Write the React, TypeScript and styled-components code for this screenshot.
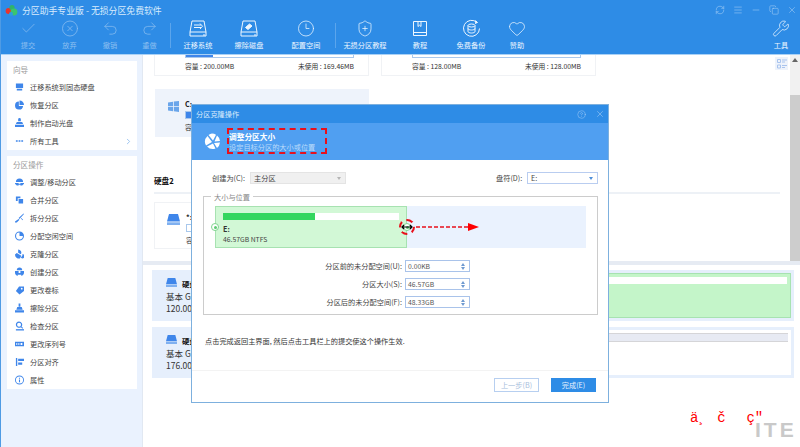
import * as React from 'react';
import styled, { createGlobalStyle } from 'styled-components';
import {
  Check,
  ChevronRight,
  CircleHelp,
  CircleX,
  Clock3,
  Copy,
  Heart,
  Menu,
  Minus,
  Redo2,
  RefreshCw,
  ShieldPlus,
  Undo2,
  Wrench,
  X,
} from 'lucide-react';

const GlobalStyle = createGlobalStyle`
  html, body {
    margin: 0;
    padding: 0;
    background: #fff;
    overflow: hidden;
  }
  * { box-sizing: border-box; }
`;

const cjk = `"Noto Sans CJK SC", "Liberation Sans", sans-serif`;
const BLUE = '#2e8ce6';
const ICON = '#3f86ea';

const Window = styled.div`
  position: relative;
  width: 800px;
  height: 447px;
  display: flex;
  flex-direction: column;
  overflow: hidden;
  background: #fff;
  border-left: 1px solid #4f9be4;
  font-family: ${cjk};
  font-size: 7.2px;
  color: #333;
`;

const Header = styled.div`
  height: 55px;
  flex: none;
  background: ${BLUE};
  border-bottom: 1px solid #a9d1f6;
`;

const TitleBar = styled.div`
  height: 19px;
  display: flex;
  align-items: center;
  padding: 1px 3px 0 4px;
  color: #d8ebfd;
  font-size: 8.85px;
`;

const TitleText = styled.span`
  margin-left: 4px;
`;

const WindowButtons = styled.div`
  margin-left: auto;
  display: flex;
  align-items: center;
  gap: 8px;
  color: #cfe5fb;
`;

const Toolbar = styled.div`
  height: 35px;
  display: flex;
  padding-left: 6px;
`;

const Tool = styled.div<{ $w: number; $ml?: number; $off?: boolean }>`
  width: ${(p) => p.$w}px;
  margin-left: ${(p) => p.$ml ?? 0}px;
  display: flex;
  flex-direction: column;
  align-items: center;
  justify-content: flex-start;
  color: ${(p) => (p.$off ? '#8dbff0' : '#eef7ff')};
  svg { height: 19px; margin-bottom: 2px; display: block; }
  span { line-height: 10px; white-space: nowrap; }
`;

const ToolSep = styled.div`
  width: 1px;
  margin: 4px 0 6px 1px;
  background: #5ba5ec;
`;

const Body = styled.div`
  flex: 1;
  display: flex;
  min-height: 0;
`;

const Sidebar = styled.div`
  width: 142px;
  flex: none;
  background: #eaf2fe;
  border-right: 1px solid #e1e8f2;
  padding: 6px 5px 0 6px;
  display: flex;
  flex-direction: column;
  gap: 6px;
`;

const SideCard = styled.div`
  background: #fff;
`;

const SideTitle = styled.div`
  height: 17px;
  line-height: 18px;
  padding-left: 6px;
  color: #9a9a9a;
  font-size: 7.6px;
`;

const SideRow = styled.div`
  height: 18px;
  display: flex;
  align-items: center;
  padding: 0 4px 0 8px;
  color: #444;
  svg { flex: none; }
  span { margin-left: 6px; white-space: nowrap; }
  svg + span + svg { margin-left: auto; }
`;

const Main = styled.div`
  flex: 1;
  display: flex;
  flex-direction: column;
  min-width: 0;
`;

const TopArea = styled.div`
  position: relative;
  height: 206px;
  flex: none;
  display: flex;
`;

const ScrollContent = styled.div`
  flex: 1;
  padding-left: 11px;
  overflow: hidden;
`;

const PartialRow = styled.div`
  height: 21px;
  display: flex;
  gap: 12px;
`;

const PartialCard = styled.div`
  width: 215px;
  height: 21px;
  padding: 0 14px 0 30px;
  background: #fff;
  border: 1px solid #f0f2f5;
  border-top: 0;
`;

const BarEnd = styled.div`
  height: 3px;
  border: 1px solid #a9c8ec;
  border-top: 0;
  position: relative;
  background: #fff;
`;

const BarFill = styled.div<{ $pct: number }>`
  height: 100%;
  width: ${(p) => p.$pct}%;
  background: ${ICON};
`;

const Metrics = styled.div`
  display: flex;
  justify-content: space-between;
  height: 12px;
  line-height: 12px;
  margin-top: 2px;
  white-space: nowrap;
  color: #333;
  font-size: 6.8px;
`;

const DiskCard = styled.div<{ $selected?: boolean; $mt: number }>`
  width: ${(p) => (p.$selected ? 214 : 215)}px;
  height: ${(p) => (p.$selected ? 48 : 47)}px;
  margin-top: ${(p) => p.$mt}px;
  margin-left: ${(p) => (p.$selected ? 1 : 0)}px;
  display: flex;
  padding: 9px 14px 0 12px;
  background: ${(p) => (p.$selected ? '#eef3fb' : '#fff')};
  border: 1px solid ${(p) => (p.$selected ? '#eef3fb' : '#f0f2f5')};
  > svg { margin: 2px 6px 0 0; flex: none; }
`;

const CardBody = styled.div`
  flex: 1;
`;

const CardName = styled.div`
  height: 12px;
  line-height: 10px;
  font-weight: 700;
  color: #222;
`;

const CardBar = styled.div`
  height: 8px;
  border: 1px solid #a9c8ec;
  background: #fff;
`;

const SectionTitle = styled.div`
  margin-top: 38px;
  height: 12px;
  line-height: 12px;
  font-size: 7.6px;
  font-weight: 700;
  color: #111;
`;

const SectionLine = styled.div`
  width: 626px;
  height: 2px;
  margin-top: 5px;
  background: #edf1f6;
`;

const ViewToggle = styled.div`
  position: absolute;
  top: 2px;
  right: 12px;
  width: 13px;
  height: 13px;
  display: flex;
  align-items: center;
  justify-content: center;
  background: #eef3fb;
`;

const Scrollbar = styled.div`
  width: 10px;
  flex: none;
  background: #f1f1f1;
  display: flex;
  flex-direction: column;
`;

const ScrollUp = styled.div`
  height: 40px;
  display: flex;
  justify-content: center;
  padding-top: 3px;
`;

const ScrollThumb = styled.div`
  flex: 1;
  background: #cdcdcd;
`;

const Divider = styled.div`
  height: 4px;
  flex: none;
  background: #e6ebf3;
`;

const DiskList = styled.div`
  flex: 1;
  padding: 5px 6px 0 9px;
  display: flex;
  flex-direction: column;
  gap: 6px;
`;

const DiskItem = styled.div`
  height: 51px;
  display: flex;
  padding: 3px;
  background: #e6effc;
`;

const DiskInfo = styled.div`
  width: 130px;
  flex: none;
  padding: 5px 0 0 11px;
  color: #333;
  font-size: 8.5px;
`;

const DiskHead = styled.div`
  height: 12px;
  display: flex;
  align-items: flex-start;
  gap: 5px;
  font-size: 7.4px;
  font-weight: 700;
  color: #111;
  span { line-height: 12px; }
`;

const DiskLine = styled.div`
  height: 12px;
  line-height: 12px;
  white-space: nowrap;
`;

const PartBlock = styled.div<{ $used?: boolean }>`
  flex: 1;
  padding: 3px 3px 0;
  background: ${(p) => (p.$used ? '#c4f5c9' : '#fff')};
  border: ${(p) => (p.$used ? '1px solid #a7e2b1' : '0')};
`;

const PartBar = styled.div<{ $used?: boolean }>`
  height: ${(p) => (p.$used ? 7 : 9)}px;
  background: ${(p) => (p.$used ? '#fff' : '#e7eaf3')};
  border-top: ${(p) => (p.$used ? '0' : '1px solid #d5d5d8')};
  border-bottom: ${(p) => (p.$used ? '0' : '1px solid #d5d5d8')};
`;

/* dialog sits over the disk view */
const Dialog = styled.div`
  position: absolute;
  left: 190px;
  top: 104px;
  width: 418px;
  height: 299px;
  display: flex;
  flex-direction: column;
  background: #fff;
  border: 1px solid #7db0de;
`;

const DialogTitle = styled.div`
  height: 18px;
  flex: none;
  display: flex;
  align-items: center;
  padding: 0 3px 0 4px;
  background: ${BLUE};
  color: #d9ebfc;
`;

const DialogButtons = styled.div`
  margin-left: auto;
  display: flex;
  align-items: center;
  gap: 9px;
  color: #cfe5fb;
`;

const Banner = styled.div`
  height: 37px;
  flex: none;
  display: flex;
  align-items: center;
  padding-left: 12px;
  background: #509ff1;
`;

const BannerText = styled.div`
  margin-left: 8px;
  padding-top: 1px;
`;

const BannerTitle = styled.div`
  line-height: 10px;
  font-size: 7.7px;
  font-weight: 700;
  color: #fff;
`;

const BannerSub = styled.div`
  line-height: 10px;
  color: #bcdcfb;
`;

const SelectRow = styled.div`
  height: 12px;
  margin-top: 12px;
  flex: none;
  display: flex;
  align-items: center;
  padding: 0 10px 0 20px;
`;

const SelectLabel = styled.span<{ $w: number; $ml?: string }>`
  width: ${(p) => p.$w}px;
  margin-left: ${(p) => p.$ml ?? 0};
  color: #444;
  white-space: nowrap;
`;

const Select = styled.div<{ $w: number; $off?: boolean }>`
  width: ${(p) => p.$w}px;
  height: 12px;
  display: flex;
  align-items: center;
  justify-content: space-between;
  padding: 0 4px 0 3px;
  background: ${(p) => (p.$off ? '#f0f0f0' : '#fff')};
  border: 1px solid ${(p) => (p.$off ? '#e4e4e4' : '#b9cdf0')};
  color: #444;
`;

const Caret = styled.i<{ $off?: boolean }>`
  width: 0;
  height: 0;
  border-left: 2.5px solid transparent;
  border-right: 2.5px solid transparent;
  border-top: 3px solid ${(p) => (p.$off ? '#b5b5b5' : '#4f8fd8')};
`;

const SizeBox = styled.div`
  position: relative;
  height: 119px;
  margin: 12px 10px 0 11px;
  flex: none;
  padding: 9px 11px 0;
  border: 1px solid #ccc;
`;

const Legend = styled.span`
  position: absolute;
  left: 7px;
  top: -5px;
  padding: 0 3px;
  line-height: 10px;
  background: #fff;
  color: #888;
`;

const Strip = styled.div`
  height: 42px;
  background: #eaf2fe;
`;

const PartPanel = styled.div`
  position: relative;
  width: 192px;
  height: 42px;
  padding: 6px 7px 0;
  background: #d2f8d6;
  border: 1px solid #a7e2b1;
`;

const UsageTrack = styled.div`
  height: 7px;
  background: #fff;
`;

const UsageFill = styled.div<{ $pct: number }>`
  height: 100%;
  width: ${(p) => p.$pct}%;
  background: #33d65f;
`;

const PartName = styled.div`
  margin-top: 4px;
  line-height: 10px;
  font-weight: 700;
  color: #333;
`;

const PartSize = styled.div`
  line-height: 10px;
  color: #444;
  font-size: 6.8px;
`;

const Handle = styled.div<{ $side: 'left' | 'right' }>`
  position: absolute;
  top: 16px;
  ${(p) => p.$side}: -5px;
  width: 8px;
  height: 8px;
  border-radius: 50%;
  background: #fff;
  border: 1px solid #7fd48e;
  display: flex;
  align-items: center;
  justify-content: center;
  &::after {
    content: '';
    width: 3px;
    height: 3px;
    border-radius: 50%;
    background: #5ccb72;
  }
`;

const Fields = styled.div`
  width: 255px;
  margin-top: 12px;
  display: flex;
  flex-direction: column;
  gap: 6px;
`;

const FieldRow = styled.div`
  display: flex;
  justify-content: flex-end;
  align-items: center;
  height: 12px;
  gap: 3px;
  color: #444;
`;

const Spin = styled.div`
  width: 65px;
  height: 12px;
  display: flex;
  align-items: center;
  justify-content: space-between;
  padding: 0 4px 0 2px;
  border: 1px solid #a9c3ea;
  font-size: 6.8px;
  color: #555;
`;

const SpinArrows = styled.div`
  display: flex;
  flex-direction: column;
  gap: 1px;
`;

const SpinUp = styled.i`
  width: 0;
  height: 0;
  border-left: 2px solid transparent;
  border-right: 2px solid transparent;
  border-bottom: 3px solid #6f9ad0;
`;

const SpinDown = styled(SpinUp)`
  border-bottom: 0;
  border-top: 3px solid #6f9ad0;
`;

const Note = styled.div`
  margin: 20px 0 0 13px;
  line-height: 12px;
  color: #333;
`;

const DialogFooter = styled.div`
  margin-top: auto;
  height: 32px;
  flex: none;
  display: flex;
  justify-content: flex-end;
  gap: 12px;
  padding: 7px 12px 0 0;
  border-top: 1px solid #f3f3f3;
`;

const FooterButton = styled.div<{ $primary?: boolean }>`
  width: 45px;
  height: 14px;
  display: flex;
  align-items: center;
  justify-content: center;
  background: ${(p) => (p.$primary ? BLUE : '#fff')};
  border: 1px solid ${(p) => (p.$primary ? BLUE : '#b7cff0')};
  color: ${(p) => (p.$primary ? '#e8f3ff' : '#a7bedc')};
`;

/* red marks drawn on top of the screenshot */
const DashedBox = styled.div`
  position: absolute;
  left: 226px;
  top: 128px;
  width: 100px;
  height: 26px;
  border: 2px dashed #e8101c;
`;

const DashedCircle = styled.div`
  position: absolute;
  left: 398px;
  top: 219px;
  width: 16px;
  height: 16px;
  border-radius: 50%;
  border: 2px dashed #e8101c;
`;

const ArrowMark = styled.svg`
  position: absolute;
  left: 400px;
  top: 220px;
`;

const Garbled = styled.div`
  position: absolute;
  left: 689px;
  top: 413px;
  white-space: pre;
  font-family: "Liberation Mono", monospace;
  font-size: 14px;
  line-height: 10px;
  word-spacing: 2px;
  color: #f00;
`;

const Watermark = styled.div`
  position: absolute;
  left: 754px;
  top: 423px;
  font-family: "Liberation Sans", sans-serif;
  font-size: 21px;
  line-height: 14px;
  font-weight: 700;
  letter-spacing: 3px;
  color: #c9c9c9;
`;

const Logo = () => (
  <svg width="13" height="13" viewBox="0 0 13 13">
    <circle cx="3.6" cy="7" r="3" fill="#e8352d" />
    <circle cx="7" cy="3.6" r="2.6" fill="#2fb36a" />
    <circle cx="9" cy="8" r="3.4" fill="#3cc46d" />
    <circle cx="6" cy="10" r="2" fill="#2e9be0" />
  </svg>
);

const DriveArrow = () => (
  <svg width="20" height="19" viewBox="0 0 20 19" fill="none" stroke="currentColor" strokeWidth="1">
    <path d="M4 2h12l2 11H2z" />
    <path d="M2 13v4h16v-4" />
    <path d="M15 16h2" />
    <path d="M6 6h7M6 8.500h7M12 4.500l2.500 2.700-2.500 2.800" />
  </svg>
);

const DriveEraser = () => (
  <svg width="20" height="19" viewBox="0 0 20 19" fill="none" stroke="currentColor" strokeWidth="1">
    <path d="M4 2h12l2 11H2z" />
    <path d="M2 13v4h16v-4" />
    <path d="M15 16h2" />
    <path d="M6.500 8.500l4-3.500 2.500 2-4 3.500z" fill="currentColor" />
  </svg>
);

const Book = () => (
  <svg width="16" height="19" viewBox="0 0 16 19" fill="none" stroke="currentColor" strokeWidth="1">
    <path d="M1.500 2.500h13v14h-13z" />
    <path d="M1.500 13.500h13" />
    <path d="M6 2.500v5l1.500-1.300L9 7.500v-5" />
  </svg>
);

const Backup = () => (
  <svg width="19" height="19" viewBox="0 0 19 19" fill="none" stroke="currentColor" strokeWidth="1">
    <path d="M15 3.500A8 8 0 1 0 17.500 9.500" />
    <path d="M13.500 1.500l2 2-2.500 1" fill="currentColor" />
    <ellipse cx="9.500" cy="6.500" rx="3.500" ry="1.500" />
    <path d="M6 6.500v6c0 2 7 2 7 0v-6M6 9.500c0 2 7 2 7 0" />
  </svg>
);

const Grid = () => (
  <svg width="10" height="10" viewBox="0 0 10 10" fill="none" stroke="#a9c4ee" strokeWidth="1">
    <path d="M.5.500h3v3h-3zM.5 6h3v3h-3z" />
    <path d="M5 1h5M5 3h3M5 6.500h5M5 8.500h3" />
  </svg>
);

const Win = () => (
  <svg width="11" height="11" viewBox="0 0 11 11" fill="#6aa5ea">
    <path d="M0 1.500l5-.8v4.300H0zM5.800.6L11 0v5H5.800zM0 5.800h5v4.400l-5-.7zM5.800 5.800H11V11l-5.200-.7z" />
  </svg>
);

const DiskGlyph = ({ w = 13, h = 11 }: { w?: number; h?: number }) => (
  <svg width={w} height={h} viewBox="0 0 13 11" fill={ICON} preserveAspectRatio="none">
    <path d="M2 0h9l2 7.500H0z" />
    <path d="M0 8.300h13V11H0z" fill="#7fb0f0" />
  </svg>
);

const sideIcons: Record<string, React.ReactNode> = {
  migrate: <path d="M1 1h8v5H1zM2 7h6v2H2z" />,
  recover: (
    <>
      <path d="M5 0a5 5 0 0 1 5 5H5z" />
      <path d="M4.300 1a4.500 4.500 0 1 0 4.700 5H4.300z" />
    </>
  ),
  boot: <path d="M3.500 1a1.500 1.500 0 1 1 3 0v2h-3zM2 4h6l1 2H1zM0 7h10v2.500H0z" />,
  more: <path d="M1 4.200h2v1.600H1zM4 4.200h2v1.600H4zM7 4.200h2v1.600H7z" />,
  resize: <path d="M5 1a4 4 0 0 1 4 4H1a4 4 0 0 1 4-4zM0 6h4v1h2V6h4v1l-2 2H6V8H4v1H2L0 7z" />,
  merge: <path d="M1 1h5v2H3v3H1zM4 4h5v5H4z" />,
  split: <path d="M9.500 0L10 .500 5 6 4 5zM4 6l1 1-3 3H0v-1zM7 5l2 2-.5.500-2-2z" />,
  alloc: <path fillRule="evenodd" d="M5 0a5 5 0 1 1 0 10A5 5 0 0 1 5 0zm0 1.200a3.800 3.800 0 1 0 3.800 3.800H5z" />,
  clone: <path d="M3.500 0a3.500 3.500 0 0 1 3 5.300L3.500 3.500zM2 4l5 3-1.500 3A4.500 4.500 0 0 1 0 5.500zM8 5a2.500 2.500 0 0 1 0 5l-1.500-.8L8.500 6z" />,
  create: <path d="M5 0a3 3 0 0 1 3 3H2a3 3 0 0 1 3-3zM0 4h4v2h2V4h4a5 5 0 0 1-3 5.500V8H3v1.500A5 5 0 0 1 0 4z" />,
  label: <path fillRule="evenodd" d="M4.500 1H10v5L5 10 1 6zM7.500 2.500a1 1 0 1 0 0 2 1 1 0 0 0 0-2z" />,
  erase: <path d="M4 0h2v3.500h-2zM2.500 4h5l1 3h-7zM0 7.500h10V10H0z" />,
  check: (
    <>
      <path fillRule="evenodd" d="M4.500 0a3.500 3.500 0 0 1 2.800 5.600L9 7.300 8.300 8 6.600 6.300A3.500 3.500 0 1 1 4.500 0zm0 1.300a2.200 2.200 0 1 0 0 4.400 2.200 2.200 0 0 0 0-4.400z" />
      <path d="M1 8.500h9V10H1z" />
    </>
  ),
  serial: <path fillRule="evenodd" d="M0 2.500h10v5H0zM1.500 4v2h1V4zM3.800 4v2h1V4zM6.200 4v2h2V4z" />,
  align: <path d="M1 .500h1.500v9H1zM3.500 1.500H10v2.500H3.500zM3.500 5.500H8V8H3.500z" />,
  info: <path fillRule="evenodd" d="M5 0a5 5 0 1 1 0 10A5 5 0 0 1 5 0zm0 1a4 4 0 1 0 0 8 4 4 0 0 0 0-8zM4.400 2.500h1.200v1.200H4.400zM4.400 4.400h1.200v3.200H4.400z" />,
};

const SideIcon = ({ name }: { name: string }) => (
  <svg width="9" height="10" viewBox="0 0 10 10" fill={ICON}>
    {sideIcons[name]}
  </svg>
);

const guideRows = [
  ['migrate', '迁移系统到固态硬盘'],
  ['recover', '恢复分区'],
  ['boot', '制作启动光盘'],
  ['more', '所有工具'],
];

const partitionRows = [
  ['resize', '调整/移动分区'],
  ['merge', '合并分区'],
  ['split', '拆分分区'],
  ['alloc', '分配空闲空间'],
  ['clone', '克隆分区'],
  ['create', '创建分区'],
  ['label', '更改卷标'],
  ['erase', '擦除分区'],
  ['check', '检查分区'],
  ['serial', '更改序列号'],
  ['align', '分区对齐'],
  ['info', '属性'],
];

const fieldRows = [
  ['分区前的未分配空间(U):', '0.00KB'],
  ['分区大小(S):', '46.57GB'],
  ['分区后的未分配空间(F):', '48.33GB'],
];

export default function App() {
  return (
    <Window>
      <GlobalStyle />
      <Header>
        <TitleBar>
          <Logo />
          <TitleText>分区助手专业版 - 无损分区免费软件</TitleText>
          <WindowButtons>
            <RefreshCw size={10} strokeWidth={1} />
            <Menu size={10} strokeWidth={1} />
            <Minus size={10} strokeWidth={1} />
            <Copy size={10} strokeWidth={1} />
            <X size={10} strokeWidth={1} />
          </WindowButtons>
        </TitleBar>
        <Toolbar>
          <Tool $w={42} $off><Check size={17} strokeWidth={1} /><span>提交</span></Tool>
          <Tool $w={41} $off><CircleX size={18} strokeWidth={1} /><span>放弃</span></Tool>
          <Tool $w={40} $off><Undo2 size={17} strokeWidth={1} /><span>撤销</span></Tool>
          <Tool $w={39} $off><Redo2 size={17} strokeWidth={1} /><span>重做</span></Tool>
          <ToolSep />
          <Tool $w={54}><DriveArrow /><span>迁移系统</span></Tool>
          <Tool $w={48}><DriveEraser /><span>擦除磁盘</span></Tool>
          <Tool $w={56} $ml={5}><Clock3 size={18} strokeWidth={1} /><span>配置空间</span></Tool>
          <ToolSep />
          <Tool $w={58}><ShieldPlus size={18} strokeWidth={1} /><span>无损分区教程</span></Tool>
          <Tool $w={52}><Book /><span>教程</span></Tool>
          <Tool $w={50}><Backup /><span>免费备份</span></Tool>
          <Tool $w={42}><Heart size={18} strokeWidth={1} /><span>赞助</span></Tool>
          <Tool $w={30} $ml={228}><Wrench size={18} strokeWidth={1} /><span>工具</span></Tool>
        </Toolbar>
      </Header>
      <Body>
        <Sidebar>
          <SideCard>
            <SideTitle>向导</SideTitle>
            {guideRows.map(([icon, label]) => (
              <SideRow key={label}>
                <SideIcon name={icon} />
                <span>{label}</span>
                {label === '所有工具' && <ChevronRight size={9} color="#7fb3ec" />}
              </SideRow>
            ))}
          </SideCard>
          <SideCard>
            <SideTitle>分区操作</SideTitle>
            {partitionRows.map(([icon, label]) => (
              <SideRow key={label}>
                <SideIcon name={icon} />
                <span>{label}</span>
              </SideRow>
            ))}
          </SideCard>
        </Sidebar>
        <Main>
          <TopArea>
            <ScrollContent>
              <PartialRow>
                <PartialCard>
                  <BarEnd><BarFill $pct={16} /></BarEnd>
                  <Metrics><span>容量 : 200.00MB</span><span>未使用 : 169.46MB</span></Metrics>
                </PartialCard>
                <PartialCard>
                  <BarEnd />
                  <Metrics><span>容量 : 128.00MB</span><span>未使用 : 128.00MB</span></Metrics>
                </PartialCard>
              </PartialRow>
              <DiskCard $selected $mt={13}>
                <Win />
                <CardBody>
                  <CardName>C:</CardName>
                  <CardBar><BarFill $pct={40} /></CardBar>
                  <Metrics><span>容量</span></Metrics>
                </CardBody>
              </DiskCard>
              <SectionTitle>硬盘2</SectionTitle>
              <SectionLine />
              <DiskCard $mt={8}>
                <DiskGlyph />
                <CardBody>
                  <CardName>*:</CardName>
                  <CardBar />
                  <Metrics><span>容量</span></Metrics>
                </CardBody>
              </DiskCard>
            </ScrollContent>
            <ViewToggle><Grid /></ViewToggle>
            <Scrollbar>
              <ScrollUp>
                <svg width="6" height="4" viewBox="0 0 6 4" fill="#666"><path d="M3 0l3 4H0z" /></svg>
              </ScrollUp>
              <ScrollThumb />
            </Scrollbar>
          </TopArea>
          <Divider />
          <DiskList>
            <DiskItem>
              <DiskInfo>
                <DiskHead><DiskGlyph w={11} h={9} /><span>硬盘1</span></DiskHead>
                <DiskLine>基本 GPT</DiskLine>
                <DiskLine>120.00GB</DiskLine>
              </DiskInfo>
              <PartBlock $used><PartBar $used /></PartBlock>
            </DiskItem>
            <DiskItem>
              <DiskInfo>
                <DiskHead><DiskGlyph w={11} h={9} /><span>硬盘2</span></DiskHead>
                <DiskLine>基本 GPT</DiskLine>
                <DiskLine>176.00GB</DiskLine>
              </DiskInfo>
              <PartBlock><PartBar /></PartBlock>
            </DiskItem>
          </DiskList>
        </Main>
      </Body>

      <Dialog>
        <DialogTitle>
          <span>分区克隆操作</span>
          <DialogButtons>
            <CircleHelp size={9} strokeWidth={1} />
            <X size={10} strokeWidth={1} />
          </DialogButtons>
        </DialogTitle>
        <Banner>
          <svg width="17" height="17" viewBox="0 0 17 17" fill="#fff">
            <path d="M8 .500a8 8 0 0 1 4 1.200L9 7.500 4.500 2A8 8 0 0 1 8 .500z" />
            <path d="M3.500 3l4.500 6-6 3.500A8 8 0 0 1 3.500 3z" />
            <path d="M13 2.500a8 8 0 0 1 3 5.500l-5.500.5zM16 9.500a8 8 0 0 1-3 5.500l-3-5zM11.500 15.500A8 8 0 0 1 3 13.500l6-3z" />
          </svg>
          <BannerText>
            <BannerTitle>调整分区大小</BannerTitle>
            <BannerSub>设定目标分区的大小或位置</BannerSub>
          </BannerText>
        </Banner>
        <SelectRow>
          <SelectLabel $w={38}>创建为(C):</SelectLabel>
          <Select $w={96} $off><span>主分区</span><Caret $off /></Select>
          <SelectLabel $w={31} $ml="auto">盘符(D):</SelectLabel>
          <Select $w={71}><span>E:</span><Caret /></Select>
        </SelectRow>
        <SizeBox>
          <Legend>大小与位置</Legend>
          <Strip>
            <PartPanel>
              <UsageTrack><UsageFill $pct={52} /></UsageTrack>
              <PartName>E:</PartName>
              <PartSize>46.57GB NTFS</PartSize>
              <Handle $side="left" />
              <Handle $side="right" />
            </PartPanel>
          </Strip>
          <Fields>
            {fieldRows.map(([label, value]) => (
              <FieldRow key={label}>
                <span>{label}</span>
                <Spin>
                  <span>{value}</span>
                  <SpinArrows><SpinUp /><SpinDown /></SpinArrows>
                </Spin>
              </FieldRow>
            ))}
          </Fields>
        </SizeBox>
        <Note>点击完成返回主界面, 然后点击工具栏上的提交使这个操作生效.</Note>
        <DialogFooter>
          <FooterButton>上一步(B)</FooterButton>
          <FooterButton $primary>完成(E)</FooterButton>
        </DialogFooter>
      </Dialog>

      <DashedBox />
      <DashedCircle />
      <ArrowMark width="80" height="14" viewBox="0 0 80 14" fill="none">
        <path d="M1 7h10M3 5L1 7l2 2M9 5l2 2-2 2" stroke="#000" strokeWidth="1.200" />
        <path d="M15 7h53" stroke="#e8101c" strokeWidth="1.500" strokeDasharray="4 2" />
        <path d="M67 3l11 4-11 4z" fill="#f00" />
      </ArrowMark>
      <Garbled>{'ä¸ č  ç″'}</Garbled>
      <Watermark>ITE</Watermark>
    </Window>
  );
}
